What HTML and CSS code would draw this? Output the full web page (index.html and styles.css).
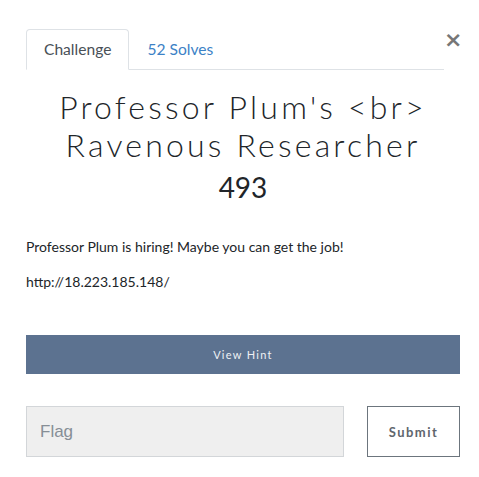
FILE: index.html
```html
<!DOCTYPE html>
<html>
<head>
<meta charset="utf-8">
<link rel="stylesheet" href="styles.css">
</head>
<body>
<div class="modal">
  <div class="header">
    <ul class="tabs">
      <li class="tab active">Challenge</li>
      <li class="tab link">52 Solves</li>
    </ul>
    <button class="close">×</button>
  </div>
  <h2 class="title">Professor Plum's &lt;br&gt;<br>Ravenous Researcher</h2>
  <h3 class="value">493</h3>
  <div class="desc">
    <p>Professor Plum is hiring! Maybe you can get the job!</p>
    <p>http://18.223.185.148/</p>
  </div>
  <button class="hint">View Hint</button>
  <div class="submit-row">
    <input class="flag" type="text" placeholder="Flag">
    <button class="submit">Submit</button>
  </div>
</div>
</body>
</html>
```
FILE: styles.css
```css
html, body {
  margin: 0;
  padding: 0;
  background: #fff;
}
body {
  font-family: Lato, "Noto Sans", sans-serif;
  color: #212529;
}
.modal {
  padding: 29px 19px 0 26px;
}
.header {
  display: flex;
  align-items: flex-start;
}
.tabs {
  flex: 1;
  display: flex;
  list-style: none;
  margin: 0;
  padding: 0;
  border-bottom: 1px solid #dee2e6;
}
.tab {
  font-size: 15.6px;
  line-height: 22px;
  padding: 8px 17px 9px;
  margin-bottom: -1px;
  border: 1px solid transparent;
  border-radius: 4px 4px 0 0;
}
.tab.active {
  color: #495057;
  border-color: #dee2e6 #dee2e6 #fff;
  background: #fff;
}
.tab.link {
  color: #3c82c6;
}
.close {
  width: 14px;
  margin: 0 2px 0 0;
  padding: 0;
  border: 0;
  background: none;
  font-family: "DejaVu Sans", sans-serif;
  font-weight: bold;
  font-size: 22px;
  line-height: 22px;
  color: #777;
  text-align: right;
}
.title {
  margin: 18px 0 0;
  text-align: center;
  font-weight: 300;
  font-size: 32px;
  line-height: 38px;
  letter-spacing: 3.2px;
  color: #212529;
}
.value {
  margin: 6px 0 0;
  text-align: center;
  font-weight: 400;
  font-size: 28px;
  line-height: 34px;
  color: #212529;
}
.desc {
  margin-top: 32px;
  font-size: 14px;
  line-height: 21px;
}
.desc p {
  margin: 0 0 14px;
}
.desc p:last-child {
  margin: 0;
}
.hint {
  display: block;
  width: 100%;
  margin-top: 43px;
  height: 39px;
  border: 0;
  background: #5c7290;
  color: #eef1f5;
  font-family: Lato, sans-serif;
  font-size: 11px;
  letter-spacing: 1.3px;
}
.submit-row {
  display: flex;
  gap: 23px;
  margin-top: 32px;
}
.flag {
  width: 318px;
  height: 51px;
  box-sizing: border-box;
  border: 1px solid #d3d6d9;
  background: #efefef;
  padding: 0 13px;
  font-family: "Liberation Sans", Arial, sans-serif;
  font-size: 17px;
  color: #495057;
}
.flag::placeholder {
  color: #868e96;
}
.submit {
  flex: 1;
  height: 51px;
  box-sizing: border-box;
  border: 1px solid #6c757d;
  background: #fff;
  color: #5f666d;
  font-family: Lato, sans-serif;
  font-weight: bold;
  font-size: 13px;
  letter-spacing: 1.5px;
}
```
